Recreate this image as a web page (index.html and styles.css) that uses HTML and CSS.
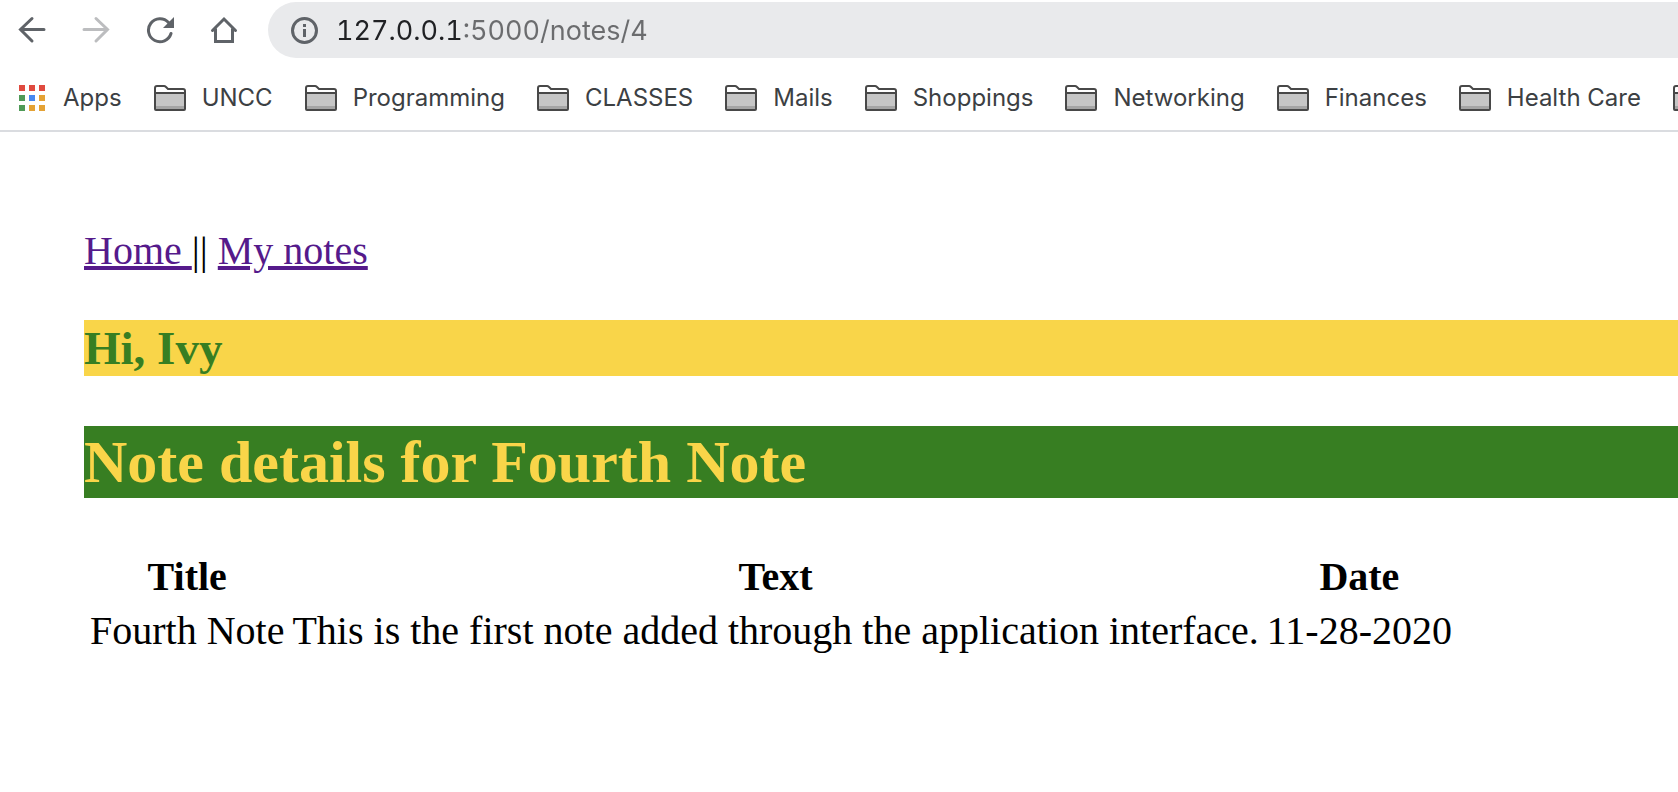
FILE: index.html
```
<!DOCTYPE html>
<html lang="en">
<head>
<meta charset="utf-8">
<meta name="viewport" content="width=device-width, initial-scale=1">
<title>Note details</title>
<link rel="stylesheet" href="styles.css">
</head>
<body>
<svg class="defs" aria-hidden="true">
  <symbol id="folder" viewBox="0 0 32 26">
    <path d="M1 24V3q0-2 2-2h7q1 0 2 1l2 2h15q2 0 2 2v18q0 1-1 1H2q-1 0-1-1z" fill="#fff"/>
    <path d="M1 8h30v16H1z" fill="#c6c6c6"/>
    <path d="M1 21h30v3H1z" fill="#a5a5a5"/>
    <path d="M1 24V3q0-2 2-2h7q1 0 2 1l2 2h15q2 0 2 2v18q0 1-1 1H2q-1 0-1-1zM1 8h30" fill="none" stroke="#484848" stroke-width="2"/>
  </symbol>
</svg>
<header class="browser">
  <div class="toolbar">
    <button class="tool" type="button" aria-label="Back"><svg class="tool-icon" viewBox="0 0 28 28"><path d="M26 13.500H3M14 2.500 2.500 13.500 14 25"/></svg></button>
    <button class="tool" type="button" aria-label="Forward" disabled><svg class="tool-icon" viewBox="0 0 28 28"><path d="M2 13.500h23M14 2.500l11.500 11L14 25"/></svg></button>
    <button class="tool" type="button" aria-label="Reload"><svg class="tool-icon" viewBox="0 0 28 28"><path d="M22.500 6.500A11.500 11.500 0 1 0 25 17.500"/><path class="solid" d="M28 1v11H17z"/></svg></button>
    <button class="tool" type="button" aria-label="Home page"><svg class="tool-icon" viewBox="0 0 28 28"><path d="M2.500 14.500 14 3l11.500 11.500M5.500 13v12.500h17V13"/></svg></button>
    <div class="omnibox">
      <svg class="info" viewBox="0 0 28 28" aria-hidden="true"><circle cx="14.500" cy="14.500" r="12" fill="none" stroke="#5f6368" stroke-width="3"/><path d="M13 8h3v3h-3zM13 13h3v8h-3z" fill="#5f6368"/></svg>
      <input class="url" type="text" aria-label="Address" value="127.0.0.1:5000/notes/4">
    </div>
  </div>
  <nav class="bookmarks" aria-label="Bookmarks">
    <button class="bookmark" type="button"><svg class="apps" viewBox="0 0 26 26"><path fill="#e04a3f" d="M0 0h6v6H0zM10 0h6v6h-6zM20 0h6v6h-6z"/><path fill="#4f9a57" d="M0 10h6v6H0zM0 20h6v6H0z"/><path fill="#4688f1" d="M10 10h6v6h-6z"/><path fill="#e4a235" d="M20 10h6v6h-6zM10 20h6v6h-6zM20 20h6v6h-6z"/></svg>Apps</button>
    <button class="bookmark" type="button"><svg class="folder"><use href="#folder"/></svg>UNCC</button>
    <button class="bookmark" type="button"><svg class="folder"><use href="#folder"/></svg>Programming</button>
    <button class="bookmark" type="button"><svg class="folder"><use href="#folder"/></svg>CLASSES</button>
    <button class="bookmark" type="button"><svg class="folder"><use href="#folder"/></svg>Mails</button>
    <button class="bookmark" type="button"><svg class="folder"><use href="#folder"/></svg>Shoppings</button>
    <button class="bookmark" type="button"><svg class="folder"><use href="#folder"/></svg>Networking</button>
    <button class="bookmark" type="button"><svg class="folder"><use href="#folder"/></svg>Finances</button>
    <button class="bookmark" type="button"><svg class="folder"><use href="#folder"/></svg>Health Care</button>
    <button class="bookmark" type="button" aria-label="Folder"><svg class="folder"><use href="#folder"/></svg></button>
  </nav>
</header>
<main class="page">
  <nav class="links"><a class="link" href="#home">Home </a>|| <a class="link" href="#notes">My notes</a></nav>
  <h3 class="greeting">Hi, Ivy</h3>
  <h2 class="heading">Note details for Fourth Note</h2>
  <table class="notes">
    <thead><tr><th>Title</th><th>Text</th><th>Date</th></tr></thead>
    <tbody><tr><td>Fourth Note</td><td>This is the first note added through the application interface.</td><td>11-28-2020</td></tr></tbody>
  </table>
</main>
</body>
</html>
```
FILE: styles.css
```
* { box-sizing: border-box; }
body {
  margin: 0;
  background: #fff;
  color: #000;
  font-family: "Liberation Serif", serif;
  font-size: 40px;
  line-height: 46px;
  overflow-x: hidden;
}
button {
  margin: 0;
  padding: 0;
  border: 0;
  background: none;
  font: inherit;
  color: inherit;
}
.defs { display: none; }
.browser {
  font-family: Inter, "Liberation Sans", sans-serif;
  border-bottom: 2px solid #dadce0;
  overflow: hidden;
}
.toolbar {
  display: flex;
  align-items: center;
  gap: 36px;
  padding: 2px 0 0 18px;
}
.tool {
  display: flex;
  flex: none;
}
.tool-icon {
  width: 28px;
  height: 28px;
  fill: none;
  stroke: #5f6368;
  stroke-width: 3;
  stroke-linecap: round;
}
.tool-icon .solid { fill: #5f6368; stroke: none; }
.tool:disabled .tool-icon { stroke: #bcbdbf; }
.omnibox {
  flex: 1;
  display: flex;
  align-items: center;
  gap: 18px;
  height: 56px;
  margin-left: -6px;
  padding-left: 22px;
  border-radius: 28px 0 0 28px;
  background: #e9eaec;
}
.info {
  flex: none;
  width: 28px;
  height: 28px;
}
.url {
  flex: 1;
  min-width: 0;
  height: 56px;
  padding: 0;
  border: 0;
  outline: 0;
  font-family: inherit;
  font-size: 27px;
  font-variant-numeric: tabular-nums;
  color: #5f6368;
  background: linear-gradient(to right, #202124 125px, #6b6c6e 125px);
  -webkit-background-clip: text;
  background-clip: text;
  -webkit-text-fill-color: transparent;
}
.bookmarks {
  display: flex;
  gap: 32px;
  height: 72px;
  padding-left: 19px;
  font-size: 24px;
  line-height: 28px;
  color: #3c4043;
}
.bookmark {
  display: flex;
  flex: none;
  align-items: center;
  gap: 16px;
  height: 79px;
  white-space: nowrap;
}
.apps {
  width: 26px;
  height: 26px;
  margin-right: 2px;
}
.folder {
  width: 32px;
  height: 26px;
}
.page { padding: 96px 0 0 84px; }
.link {
  color: #551a8b;
  text-decoration-thickness: 4px;
  white-space: pre;
}
.greeting {
  margin: 46px 0 50px;
  background: #f9d549;
  color: #377e22;
  font-size: 47px;
  line-height: 56px;
}
.heading {
  margin: 0 0 50px;
  background: #377e22;
  color: #f9d549;
  font-size: 60px;
  line-height: 72px;
}
.notes { border-spacing: 4px; }
.notes th, .notes td { padding: 2px; }
```
